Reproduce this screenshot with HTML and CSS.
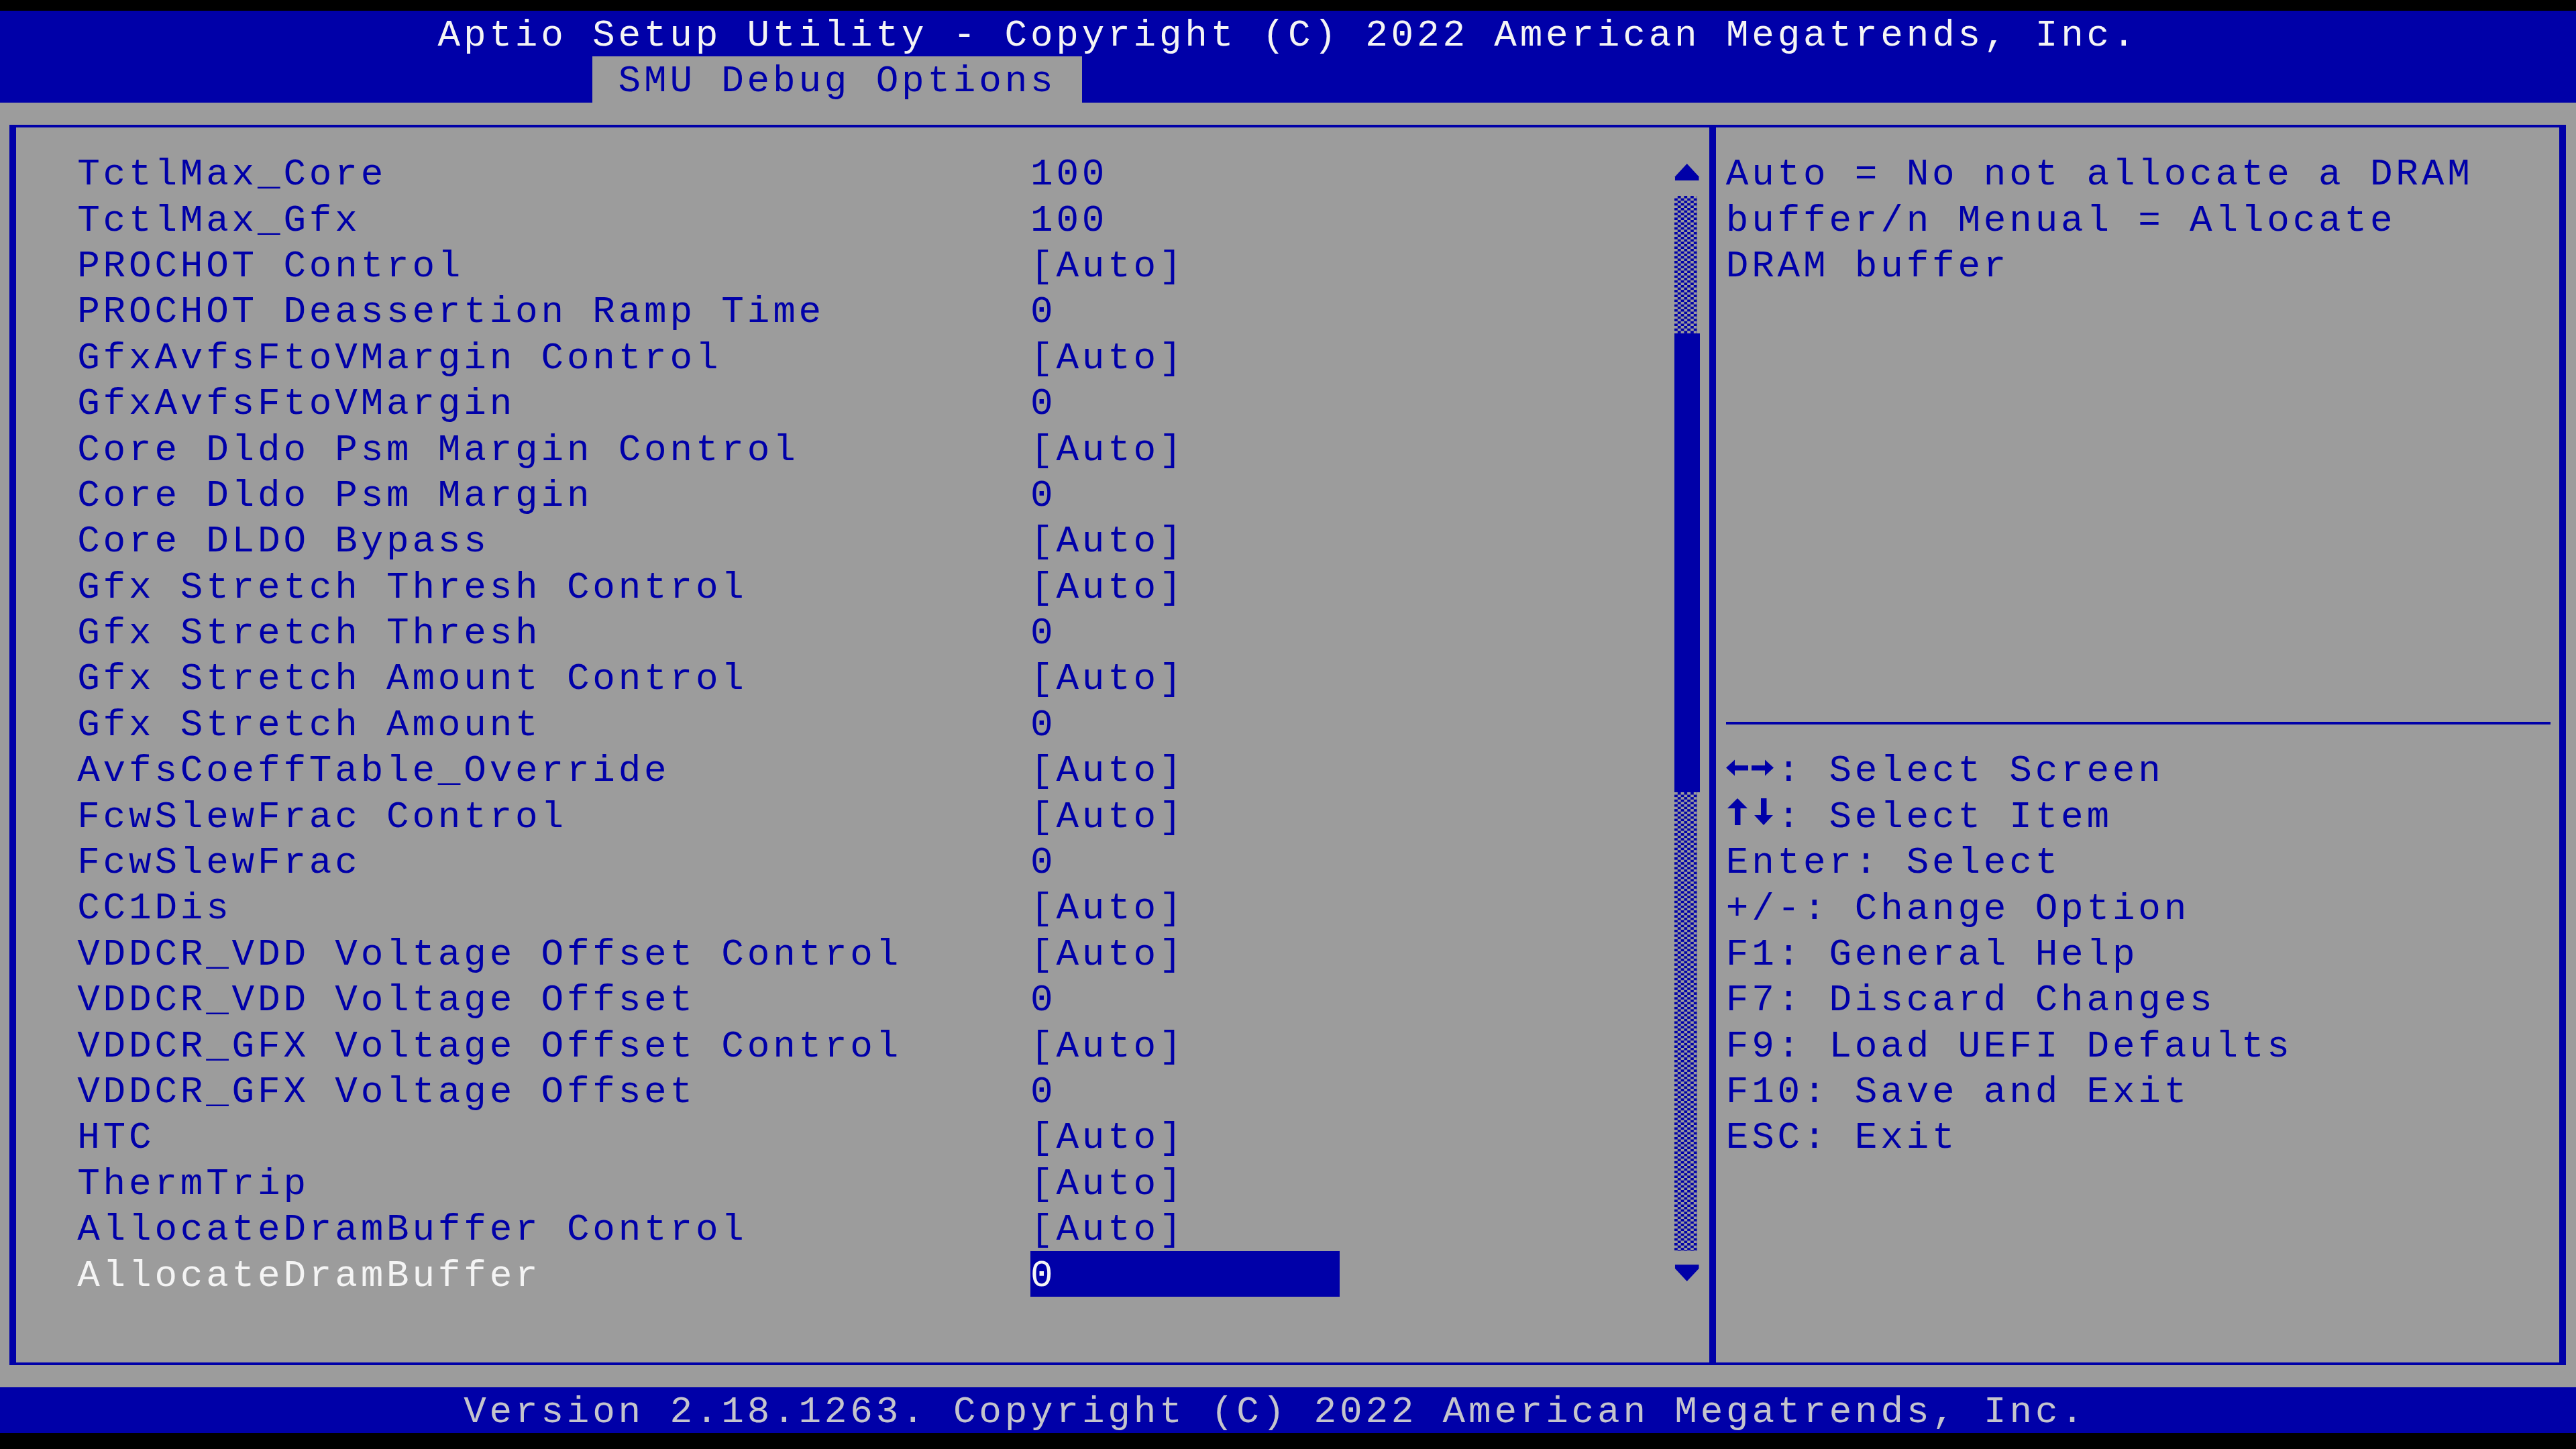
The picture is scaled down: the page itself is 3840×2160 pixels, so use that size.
FILE: index.html
```html
<!DOCTYPE html>
<html lang="en">
<head>
    <meta charset="UTF-8">
    <title>Aptio Setup Utility</title>
    <link rel="stylesheet" href="styles.css">
</head>
<body>
<div class="screen">
    <header class="top">
        <div class="line title">Aptio Setup Utility - Copyright (C) 2022 American Megatrends, Inc.</div>
        <div class="tabs"><span class="tab">SMU Debug Options</span></div>
    </header>

    <main class="body">
        <div class="frame">
            <section class="options">
                <div class="list">
                    <div class="row"><span class="label">TctlMax_Core</span><span class="value">100</span></div>
                    <div class="row"><span class="label">TctlMax_Gfx</span><span class="value">100</span></div>
                    <div class="row"><span class="label">PROCHOT Control</span><span class="value">[Auto]</span></div>
                    <div class="row"><span class="label">PROCHOT Deassertion Ramp Time</span><span class="value">0</span></div>
                    <div class="row"><span class="label">GfxAvfsFtoVMargin Control</span><span class="value">[Auto]</span></div>
                    <div class="row"><span class="label">GfxAvfsFtoVMargin</span><span class="value">0</span></div>
                    <div class="row"><span class="label">Core Dldo Psm Margin Control</span><span class="value">[Auto]</span></div>
                    <div class="row"><span class="label">Core Dldo Psm Margin</span><span class="value">0</span></div>
                    <div class="row"><span class="label">Core DLDO Bypass</span><span class="value">[Auto]</span></div>
                    <div class="row"><span class="label">Gfx Stretch Thresh Control</span><span class="value">[Auto]</span></div>
                    <div class="row"><span class="label">Gfx Stretch Thresh</span><span class="value">0</span></div>
                    <div class="row"><span class="label">Gfx Stretch Amount Control</span><span class="value">[Auto]</span></div>
                    <div class="row"><span class="label">Gfx Stretch Amount</span><span class="value">0</span></div>
                    <div class="row"><span class="label">AvfsCoeffTable_Override</span><span class="value">[Auto]</span></div>
                    <div class="row"><span class="label">FcwSlewFrac Control</span><span class="value">[Auto]</span></div>
                    <div class="row"><span class="label">FcwSlewFrac</span><span class="value">0</span></div>
                    <div class="row"><span class="label">CC1Dis</span><span class="value">[Auto]</span></div>
                    <div class="row"><span class="label">VDDCR_VDD Voltage Offset Control</span><span class="value">[Auto]</span></div>
                    <div class="row"><span class="label">VDDCR_VDD Voltage Offset</span><span class="value">0</span></div>
                    <div class="row"><span class="label">VDDCR_GFX Voltage Offset Control</span><span class="value">[Auto]</span></div>
                    <div class="row"><span class="label">VDDCR_GFX Voltage Offset</span><span class="value">0</span></div>
                    <div class="row"><span class="label">HTC</span><span class="value">[Auto]</span></div>
                    <div class="row"><span class="label">ThermTrip</span><span class="value">[Auto]</span></div>
                    <div class="row"><span class="label">AllocateDramBuffer Control</span><span class="value">[Auto]</span></div>
                    <div class="row sel"><span class="label">AllocateDramBuffer</span><span class="value">0</span></div>
                </div>

                <!-- scroll bar: arrow, dotted track, thumb, dotted track, arrow -->
                <div class="scroll">
                    <div class="arrow">
                        <svg width="38.4" height="68.4" viewBox="0 0 8 19" preserveAspectRatio="none">
                            <polygon points="3.9,5.8 7.6,11.2 7.6,12.8 0.2,12.8 0.2,11.2" fill="#0000a8"/>
                        </svg>
                    </div>
                    <div class="track top-track"></div>
                    <div class="thumb"></div>
                    <div class="track bottom-track"></div>
                    <div class="arrow">
                        <svg width="38.4" height="68.4" viewBox="0 0 8 19" preserveAspectRatio="none">
                            <polygon points="0.2,5.6 7.6,5.6 7.6,7.2 3.9,12.5 0.2,7.2" fill="#0000a8"/>
                        </svg>
                    </div>
                </div>
            </section>

            <aside class="side">
                <div class="help">
                    <div class="line">Auto = No not allocate a DRAM</div>
                    <div class="line">buffer/n Menual = Allocate</div>
                    <div class="line">DRAM buffer</div>
                </div>
                <div class="sep"></div>
                <div class="keys">
                    <div class="line"><svg class="key" width="38.4" height="45" viewBox="0 0 38.4 45"><polygon points="0,25.6 13,13.6 13,37.6" fill="#0000a8"/><rect x="12" y="22" width="21" height="7.5" fill="#0000a8"/></svg><svg class="key" width="38.4" height="45" viewBox="0 0 38.4 45"><polygon points="33,25.6 20,13.6 20,37.6" fill="#0000a8"/><rect x="0" y="22" width="21" height="7.5" fill="#0000a8"/></svg>: Select Screen</div>
                    <div class="line"><svg class="key" width="38.4" height="45" viewBox="0 0 38.4 45"><polygon points="17,2 32,17 2,17" fill="#0000a8"/><rect x="13" y="16" width="8.5" height="26" fill="#0000a8"/></svg><svg class="key" width="38.4" height="45" viewBox="0 0 38.4 45"><polygon points="18,42 32,27 4,27" fill="#0000a8"/><rect x="14" y="2" width="8.5" height="26" fill="#0000a8"/></svg>: Select Item</div>
                    <div class="line">Enter: Select</div>
                    <div class="line">+/-: Change Option</div>
                    <div class="line">F1: General Help</div>
                    <div class="line">F7: Discard Changes</div>
                    <div class="line">F9: Load UEFI Defaults</div>
                    <div class="line">F10: Save and Exit</div>
                    <div class="line">ESC: Exit</div>
                </div>
            </aside>
        </div>
    </main>

    <footer class="line bottom">Version 2.18.1263. Copyright (C) 2022 American Megatrends, Inc.</footer>
</div>
</body>
</html>
```

FILE: styles.css
```css
/* text grid: 100 columns x 31 rows, one cell = 38.4 x 68.4 */
:root {
    --cw: 38.4px;
    --rh: 68.4px;
    --blue: #0000a8;
    --gray: #9c9c9c;
}
* {
    box-sizing: border-box;
}
html, body {
    margin: 0;
}
body {
    width: 3840px;
    height: 2160px;
    overflow: hidden;
    background-color: #000;
    color: var(--blue);
    font-family: "Liberation Mono", "DejaVu Sans Mono", monospace;
    font-size: 56px;
    letter-spacing: 4.8px;
}
.screen {
    padding-top: 16px;
}
.line,
.row span,
.tab {
    white-space: pre;
}
.line {
    height: var(--rh);
    padding-top: 7px;
    line-height: 61.4px;
}

/* header */
.top {
    background-color: var(--blue);
}
.title {
    text-align: center;
    color: #f4f4f4;
}
.tabs {
    height: var(--rh);
    padding-left: 883.2px;
}
.tab {
    display: inline-block;
    height: var(--rh);
    padding: 7px var(--cw) 0;
    line-height: 61.4px;
    background-color: var(--gray);
    color: var(--blue);
}

/* main area */
.body {
    height: 1915.2px;
    padding: 33.7px 15px 0 14px;
    background-color: var(--gray);
}
.frame {
    display: flex;
    height: 1849px;
    border: solid var(--blue);
    border-width: 4px 10px;
}
.options {
    flex: 1;
    display: flex;
    padding: 32.7px 13.6px 0 91.2px;
}
.list {
    width: 1881.6px;
}
.row {
    display: grid;
    grid-template-columns: 1420.8px 460.8px;
    height: var(--rh);
}
.row span {
    padding-top: 7px;
    line-height: 61.4px;
}
.sel .label {
    color: #f4f4f4;
}
.sel .value {
    background-color: var(--blue);
    color: #f4f4f4;
}

/* scroll bar */
.scroll {
    margin-left: auto;
    width: var(--cw);
    display: flex;
    flex-direction: column;
}
.arrow {
    height: var(--rh);
}
.arrow svg {
    display: block;
}
.track {
    width: 33.6px;
    background-image: conic-gradient(var(--blue) 25%, transparent 0 50%, var(--blue) 0 75%, transparent 0);
    background-size: 9.6px 7.2px;
}
.top-track {
    height: 205.2px;
}
.bottom-track {
    height: 684px;
}
.thumb {
    height: 684px;
    background-color: var(--blue);
}

/* help panel */
.side {
    width: 1267px;
    border-left: 10px solid var(--blue);
    padding: 32.7px 0 0 14.8px;
}
.help {
    height: calc(var(--rh) * 12);
}
.sep {
    height: var(--rh);
    display: flex;
    align-items: center;
}
.sep::before {
    content: "";
    width: 1228.8px;
    height: 4px;
    background-color: var(--blue);
}
.key {
    vertical-align: baseline;
}

/* footer: the firmware writes this line from column 18 */
.bottom {
    padding-left: 691.2px;
    background-color: var(--blue);
    color: #c4c4cc;
}
```
